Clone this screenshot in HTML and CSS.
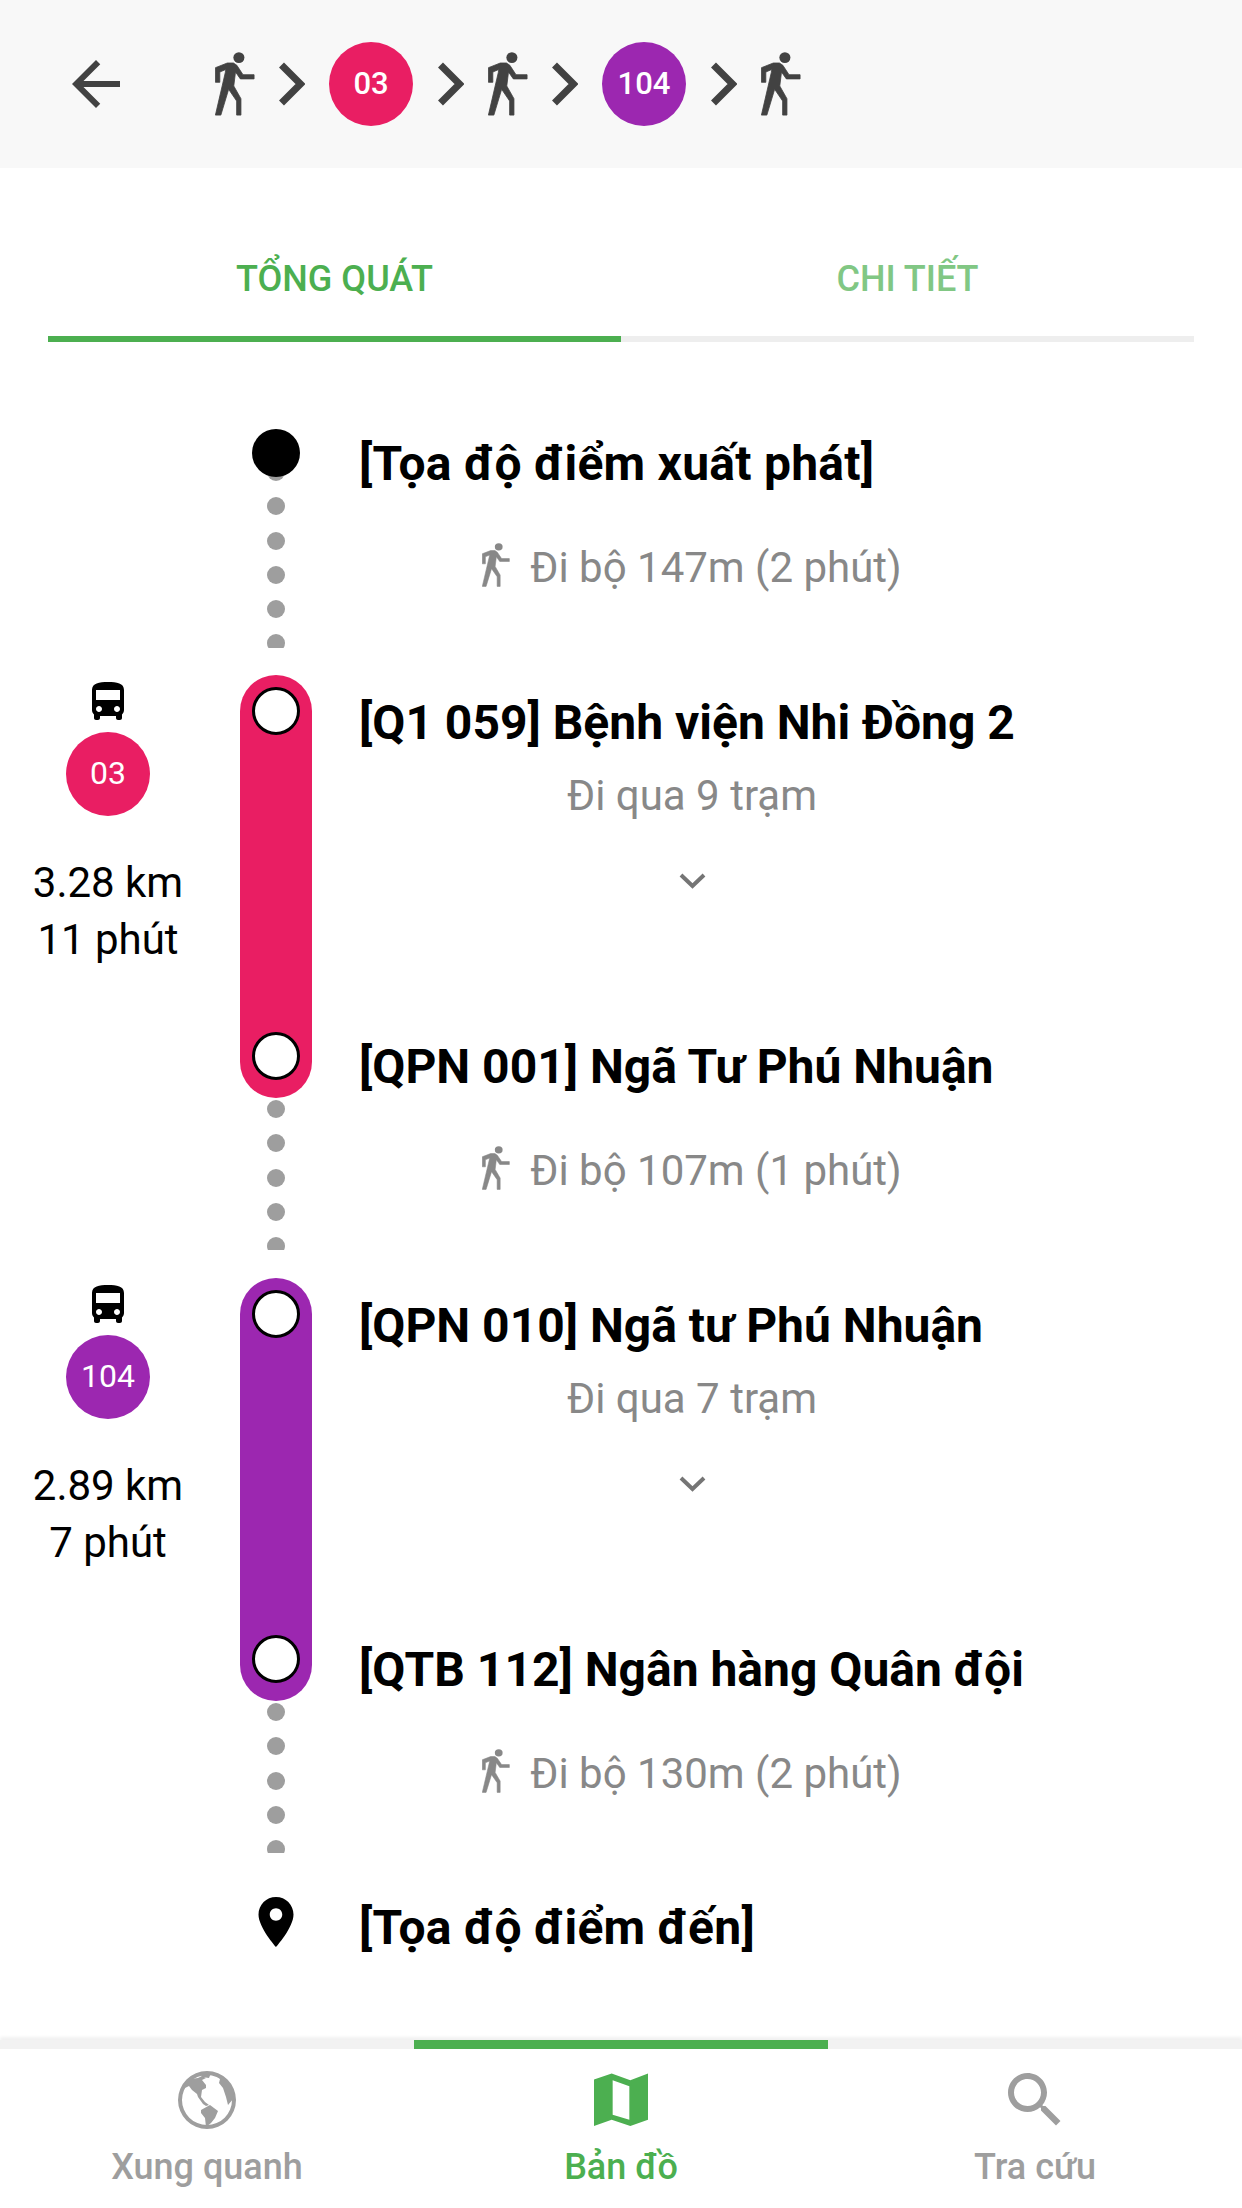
FILE: index.html
```html
<!DOCTYPE html>
<html lang="vi">
<head>
    <meta charset="UTF-8">
    <meta name="viewport" content="width=device-width, initial-scale=1.0">
    <title>Lộ trình</title>
    <link rel="stylesheet" href="styles.css">
</head>
<body>
    <svg class="sprites" width="0" height="0">
        <symbol id="walk" viewBox="0 0 39 64" preserveAspectRatio="none"><circle cx="23.3" cy="5.6" r="5.4"/><path stroke="currentColor" stroke-width="0.8" d="M0.400 15.700L12 11H18L21.300 13.300L27.300 22.700H38.100V26.900H24.700L20 20L18.300 34L25.300 46.700V63.100H21.100V49L13.300 37.300L5.700 63.100H0.400L10 20.700L10.500 17.500L4.700 20V30.300H0.400z"/></symbol>
        <symbol id="next" viewBox="0 0 27 44"><path d="M3.500 3L22.500 22L3.500 41" fill="none" stroke="currentColor" stroke-width="7"/></symbol>
        <symbol id="more" viewBox="0 0 27 16"><path d="M2 2L13.500 13L25 2" fill="none" stroke="currentColor" stroke-width="4"/></symbol>
        <symbol id="bus" viewBox="4 2 16 19"><path d="M4 16c0 .88.39 1.67 1 2.22V20c0 .55.45 1 1 1h1c.55 0 1-.45 1-1v-1h8v1c0 .55.45 1 1 1h1c.55 0 1-.45 1-1v-1.78c.61-.55 1-1.34 1-2.22V6c0-3.5-3.58-4-8-4s-8 .5-8 4v10zm3.500 1c-.83 0-1.500-.67-1.500-1.500S6.670 14 7.500 14s1.500.67 1.500 1.500S8.330 17 7.500 17zm9 0c-.83 0-1.500-.67-1.500-1.500s.67-1.500 1.500-1.500 1.500.67 1.500 1.500-.67 1.500-1.500 1.500zm1.500-6H6V6h12v5z"/></symbol>
    </svg>

    <header class="topbar">
        <svg class="back" viewBox="4 4 16 16"><path d="M20 11H7.830l5.590-5.590L12 4l-8 8 8 8 1.410-1.410L7.830 13H20v-2z"/></svg>
        <div class="route">
            <svg class="ic-walk"><use href="#walk"/></svg>
            <svg class="ic-next"><use href="#next"/></svg>
            <span class="badge pink">03</span>
            <svg class="ic-next"><use href="#next"/></svg>
            <svg class="ic-walk"><use href="#walk"/></svg>
            <svg class="ic-next"><use href="#next"/></svg>
            <span class="badge purple">104</span>
            <svg class="ic-next"><use href="#next"/></svg>
            <svg class="ic-walk"><use href="#walk"/></svg>
        </div>
    </header>

    <nav class="tabs">
        <div class="tab active">TỔNG QUÁT</div>
        <div class="tab">CHI TIẾT</div>
    </nav>

    <main class="timeline">
        <section class="row origin">
            <div class="rail"><span class="start-dot"></span></div>
            <div class="title coord">[Tọa độ điểm xuất phát]</div>
        </section>

        <section class="row walk">
            <div class="rail"><div class="dots dots-first"><i></i><i></i><i></i><i></i><i></i><i></i></div></div>
            <div class="walk-text"><svg class="ic-walk-sm"><use href="#walk"/></svg>Đi bộ 147m (2 phút)</div>
        </section>

        <section class="row ride">
            <div class="side">
                <svg class="ic-bus"><use href="#bus"/></svg>
                <span class="badge small pink">03</span>
                <div class="dist">3.28 km<br>11 phút</div>
            </div>
            <div class="rail"><div class="pill pink"><span class="stop-dot"></span><span class="stop-dot"></span></div></div>
            <div class="ride-body">
                <div class="title">[Q1 059] Bệnh viện Nhi Đồng 2</div>
                <div class="pass">Đi qua 9 trạm</div>
                <svg class="ic-more"><use href="#more"/></svg>
                <div class="title last">[QPN 001] Ngã Tư Phú Nhuận</div>
            </div>
        </section>

        <section class="row walk">
            <div class="rail"><div class="dots"><i></i><i></i><i></i><i></i><i></i></div></div>
            <div class="walk-text"><svg class="ic-walk-sm"><use href="#walk"/></svg>Đi bộ 107m (1 phút)</div>
        </section>

        <section class="row ride">
            <div class="side">
                <svg class="ic-bus"><use href="#bus"/></svg>
                <span class="badge small purple">104</span>
                <div class="dist">2.89 km<br>7 phút</div>
            </div>
            <div class="rail"><div class="pill purple"><span class="stop-dot"></span><span class="stop-dot"></span></div></div>
            <div class="ride-body">
                <div class="title">[QPN 010] Ngã tư Phú Nhuận</div>
                <div class="pass">Đi qua 7 trạm</div>
                <svg class="ic-more"><use href="#more"/></svg>
                <div class="title last">[QTB 112] Ngân hàng Quân đội</div>
            </div>
        </section>

        <section class="row walk">
            <div class="rail"><div class="dots"><i></i><i></i><i></i><i></i><i></i></div></div>
            <div class="walk-text"><svg class="ic-walk-sm"><use href="#walk"/></svg>Đi bộ 130m (2 phút)</div>
        </section>

        <section class="row dest">
            <div class="rail">
                <svg class="ic-pin" viewBox="5 2 14 20"><path d="M12 2C8.130 2 5 5.130 5 9c0 5.250 7 13 7 13s7-7.750 7-13c0-3.870-3.130-7-7-7zm0 9.500c-1.380 0-2.500-1.120-2.500-2.500s1.120-2.500 2.500-2.500 2.500 1.120 2.500 2.500-1.120 2.500-2.500 2.500z"/></svg>
            </div>
            <div class="title coord">[Tọa độ điểm đến]</div>
        </section>
    </main>

    <footer class="bottom-nav">
        <div class="nav-item">
            <svg class="nav-ic globe" viewBox="0 0 58 58">
                <path fill-rule="evenodd" d="M29 0a29 29 0 1 0 0 58a29 29 0 1 0 0-58zM29 4a25 25 0 1 1 0 50a25 25 0 1 1 0-50z"/>
                <path d="M8 10L13 8L20 7L24 5L28 7L24 9L28 14L28 17L24 19L23 26L27 31L31 34L28 35L25 33L20 26L19 23L14 19L11 15L7 17z"/>
                <path d="M22 2H33L31 7L24 6z"/>
                <path d="M23 39L32 34L40 40L37 47L33 52L28 56L27 47L23 42z"/>
                <path d="M38 3L45 6L53 14L56 27L50 34L48 26L45 17L41 12L42 8z"/>
            </svg>
            <span>Xung quanh</span>
        </div>
        <div class="nav-item current">
            <svg class="nav-ic" viewBox="0 0 55 54">
                <path fill-rule="evenodd" d="M0 6L18 0L37 7L55 0V47L37 53.500L18 47L0 53.500zM19 7V42L36 47V13z"/>
            </svg>
            <span>Bản đồ</span>
        </div>
        <div class="nav-item">
            <svg class="nav-ic" viewBox="3 3 18 18">
                <path d="M15.500 14h-.79l-.28-.27C15.410 12.590 16 11.110 16 9.500 16 5.910 13.090 3 9.500 3S3 5.910 3 9.500 5.910 16 9.500 16c1.610 0 3.090-.59 4.230-1.570l.27.28v.79l5 4.990L20.490 19l-4.990-5zm-6 0C7.010 14 5 11.990 5 9.500S7.010 5 9.500 5 14 7.010 14 9.500 11.990 14 9.500 14z"/>
            </svg>
            <span>Tra cứu</span>
        </div>
    </footer>
</body>
</html>
```

FILE: styles.css
```css
* {
    box-sizing: border-box;
}

body {
    margin: 0;
    height: 2208px;
    overflow: hidden;
    background: #fff;
    font-family: Roboto, "Noto Sans", sans-serif;
    color: #000;
    display: flex;
    flex-direction: column;
}

.sprites {
    position: absolute;
}

/* thanh trên cùng */
.topbar {
    height: 168px;
    background: #f8f8f8;
    display: flex;
    align-items: center;
    padding-left: 72px;
    flex: none;
    color: #424242;
}

.topbar svg {
    fill: #424242;
}

.back {
    width: 48px;
    height: 48px;
    margin-right: 95px;
}

.route {
    display: flex;
    align-items: center;
    gap: 24px;
}

.ic-walk {
    width: 40px;
    height: 64px;
    margin-right: -1px;
}

.ic-next {
    width: 27px;
    height: 44px;
}

.badge {
    width: 84px;
    height: 84px;
    padding-bottom: 2px;
    border-radius: 50%;
    color: #fff;
    font-size: 31px;
    font-weight: 500;
    display: flex;
    align-items: center;
    justify-content: center;
}

.badge.small {
    font-size: 32px;
    font-weight: 400;
}

.pink {
    background: #e91e63;
}

.purple {
    background: #9c27b0;
}

/* tab */
.tabs {
    display: flex;
    margin: 0 48px;
    height: 174px;
    flex: none;
}

.tab {
    flex: 1;
    text-align: center;
    font-size: 36px;
    font-weight: 500;
    line-height: 222px;
    height: 174px;
    color: #81c784;
    border-bottom: 6px solid #eeeeee;
}

.tab.active {
    color: #4caf50;
    border-bottom-color: #4caf50;
}

/* lộ trình */
.timeline {
    flex: 1;
    padding-top: 87px;
}

.row {
    display: grid;
    grid-template-columns: 240px 72px 1fr;
}

.rail {
    grid-column: 2;
    display: flex;
    flex-direction: column;
    align-items: center;
}

.title {
    grid-column: 3;
    margin-left: 47px;
    font-size: 48px;
    font-weight: 700;
    line-height: 64px;
    white-space: nowrap;
}

.title.coord {
    letter-spacing: 0.25px;
}

.origin {
    height: 66px;
}

.origin .title {
    padding-top: 3px;
}

.start-dot {
    width: 48px;
    height: 48px;
    border-radius: 50%;
    background: #000;
    position: relative;
    z-index: 1;
}

.walk {
    height: 180px;
}

.dots {
    height: 150px;
    margin-top: 2px;
    overflow: hidden;
    display: flex;
    flex-direction: column;
    gap: 16.3px;
    flex: none;
}

.dots-first {
    height: 184.5px;
    margin-top: -32px;
}

.dots i {
    display: block;
    width: 18px;
    height: 18px;
    border-radius: 50%;
    background: #9e9e9e;
    flex: none;
}

.walk-text {
    grid-column: 3;
    margin-left: 47px;
    width: 666px;
    height: 145px;
    display: flex;
    align-items: center;
    justify-content: center;
    gap: 20px;
    font-size: 42px;
    color: #888;
    white-space: nowrap;
}

.ic-walk-sm {
    width: 28px;
    height: 44px;
    fill: #888;
    color: #888;
    margin-top: -6px;
}

.ride {
    height: 423px;
}

.side {
    width: 216px;
    padding-top: 7px;
    display: flex;
    flex-direction: column;
    align-items: center;
}

.ic-bus {
    width: 34px;
    height: 38px;
}

.side .badge {
    margin-top: 12px;
}

.dist {
    margin-top: 38px;
    font-size: 42px;
    line-height: 57px;
    text-align: center;
}

.pill {
    width: 72px;
    height: 423px;
    border-radius: 36px;
    padding: 12px 0 18px;
    display: flex;
    flex-direction: column;
    align-items: center;
    justify-content: space-between;
}

.stop-dot {
    width: 48px;
    height: 48px;
    border-radius: 50%;
    background: #fff;
    border: 3px solid #000;
}

.ride-body {
    grid-column: 3;
    margin-left: 47px;
    padding-top: 16px;
    display: flex;
    flex-direction: column;
}

.ride-body .title {
    margin-left: 0;
}

.ride-body .last {
    margin-top: auto;
    margin-bottom: -1px;
}

.pass {
    width: 666px;
    margin-top: 16px;
    font-size: 42px;
    line-height: 50px;
    color: #888;
    text-align: center;
}

.ic-more {
    width: 27px;
    height: 16px;
    margin: 52px 0 0 320px;
    color: #757575;
}

.dest {
    padding-top: 15px;
}

.ic-pin {
    width: 38px;
    height: 50px;
    margin-top: 1px;
}

/* thanh dưới */
.bottom-nav {
    height: 168px;
    flex: none;
    display: flex;
    border-top: 9px solid #f2f2f2;
    box-shadow: 0 -3px 3px rgba(0, 0, 0, 0.06);
}

.nav-item {
    flex: 1;
    display: flex;
    flex-direction: column;
    align-items: center;
    margin-top: -9px;
    padding-top: 24px;
    border-top: 9px solid transparent;
    font-size: 36px;
    font-weight: 500;
    color: #9e9e9e;
}

.nav-item span {
    margin-top: 19px;
}

.nav-item.current {
    color: #4caf50;
    border-top-color: #4caf50;
}

.nav-ic {
    width: 54px;
    height: 54px;
    fill: currentColor;
}

.nav-ic.globe {
    width: 58px;
    height: 58px;
    margin: -2px 0 -2px;
}
```
